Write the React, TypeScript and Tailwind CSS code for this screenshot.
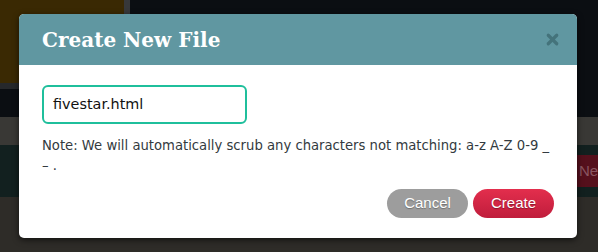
import { X } from 'lucide-react'

export default function App() {
  return (
    <div className="relative w-[598px] h-[252px] overflow-hidden bg-[#0b0e12]">
      {/* ── Dimmed page behind the dialog ── */}
      <div className="flex flex-col h-full">
        <div className="flex h-[117px]">
          <div className="flex flex-col w-[124px]">
            <div className="h-[83px] bg-[#3a2903]" />
            <div className="h-[6px] bg-[#26282b]" />
            <div className="flex-1 bg-[#0b0e12]" />
          </div>
          <div className="w-[6px] bg-[#37383a]" />
          <div className="flex-1 bg-[#0b0e12]" />
        </div>
        <div className="h-[28px] bg-[#393835]" />
        <div className="h-[52px] bg-[#12201f] flex justify-end items-center">
          <div className="h-[32px] w-[21px] overflow-hidden whitespace-nowrap bg-[#55101c] text-[#8a5560] text-[15px] font-['Liberation_Sans',sans-serif] flex items-center pl-[2px]">
            New
          </div>
        </div>
        <div className="flex-1 bg-[#2e2c28]" />
      </div>

      {/* ── Dialog ── */}
      <div className="absolute left-[19px] top-[14px] w-[558px] h-[224px] rounded-[5px] bg-white overflow-hidden flex flex-col shadow-[0_2px_6px_rgba(0,0,0,0.6)]">
        <div className="h-[51px] bg-[#6097a1] flex items-center justify-between pl-[23px] pr-[16px]">
          <h1 className="text-white font-bold text-[20px] font-['DejaVu_Serif',serif] leading-none mt-[1px]">
            Create New File
          </h1>
          <X className="w-[17px] h-[17px] text-[#44737b]" strokeWidth={4.5} />
        </div>

        <div className="flex-1 flex flex-col px-[23px] pt-[20px] pb-[20px]">
          <div className="w-[205px] h-[39px] border-2 border-[#1fbf9c] rounded-[6px] flex items-center pl-[9px]">
            <span className="text-[14.4px] text-[#111] font-['DejaVu_Sans',sans-serif]">fivestar.html</span>
          </div>
          <p className="mt-[12px] text-[13.2px] leading-[20px] text-[#333a40] font-['DejaVu_Sans',sans-serif]">
            Note: We will automatically scrub any characters not matching: a-z A-Z 0-9 _ – .
          </p>
          <div className="mt-auto flex justify-end gap-[5px]">
            <button className="w-[81px] h-[29px] rounded-full bg-[#9d9d9d] text-white text-[15px] font-['Liberation_Sans',sans-serif] [text-shadow:0_1px_1px_rgba(0,0,0,0.3)]">
              Cancel
            </button>
            <button className="w-[81px] h-[29px] rounded-full bg-gradient-to-b from-[#e32e4d] to-[#c01d3c] text-white text-[15px] font-['Liberation_Sans',sans-serif] [text-shadow:0_1px_1px_rgba(0,0,0,0.35)]">
              Create
            </button>
          </div>
        </div>
      </div>
    </div>
  )
}
